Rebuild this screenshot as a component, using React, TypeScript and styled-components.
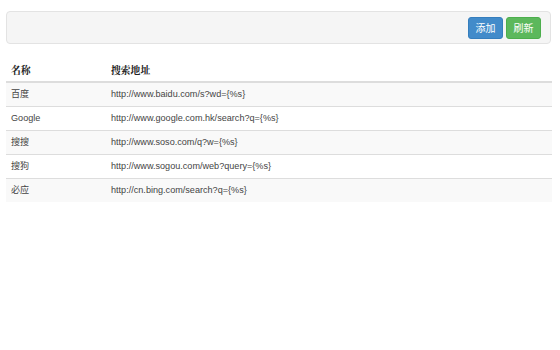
import styled, { createGlobalStyle } from "styled-components";

const GlobalStyle = createGlobalStyle`
  body {
    margin: 0;
    background: #fff;
    font-family: "Liberation Sans", Arial, "Noto Sans CJK SC", sans-serif;
    color: #333;
  }
`;

const Page = styled.div`
  width: 546px;
  padding: 11px 0 0 6px;
`;

const Toolbar = styled.div`
  height: 31px;
  margin-right: 1px;
  display: flex;
  align-items: center;
  justify-content: flex-end;
  gap: 3px;
  padding: 0 9px;
  background-color: #f5f5f5;
  border: 1px solid #e3e3e3;
  border-radius: 4px;
`;

const Button = styled.button<{ $variation: "primary" | "success" }>`
  width: 35px;
  height: 22px;
  padding: 0;
  border: 1px solid
    ${(p) => (p.$variation === "primary" ? "#357ebd" : "#4cae4c")};
  border-radius: 3px;
  background-color: ${(p) =>
    p.$variation === "primary" ? "#428bca" : "#5cb85c"};
  color: #fff;
  font-family: "Noto Sans CJK SC", sans-serif;
  font-size: 10px;
  line-height: 20px;
  cursor: pointer;
`;

const Table = styled.table`
  width: 546px;
  margin-top: 14px;
  border-collapse: collapse;
  font-size: 9.1px;

  & tbody tr + tr td {
    border-top: 1px solid #dddddd;
  }
`;

const Th = styled.th`
  padding: 6px 5px 5px;
  line-height: 12px;
  text-align: left;
  font-size: 9.8px;
  font-weight: bold;
  font-family: "Noto Serif CJK SC", "Noto Sans CJK SC", serif;
  color: #222;
  border-bottom: 2px solid #dddddd;
  &:first-child {
    width: 90px;
  }
`;

const Row = styled.tr<{ $striped: boolean }>`
  background-color: ${(p) => (p.$striped ? "#f9f9f9" : "#fff")};
`;

const Td = styled.td`
  padding: 6px 5px;
  line-height: 11px;
  color: #444;
  font-family: "Liberation Sans", Arial, "Noto Sans CJK SC", sans-serif;
`;

const engines = [
  { name: "百度", url: "http://www.baidu.com/s?wd={%s}" },
  { name: "Google", url: "http://www.google.com.hk/search?q={%s}" },
  { name: "搜搜", url: "http://www.soso.com/q?w={%s}" },
  { name: "搜狗", url: "http://www.sogou.com/web?query={%s}" },
  { name: "必应", url: "http://cn.bing.com/search?q={%s}" },
];

function App() {
  return (
    <>
      <GlobalStyle />
      <Page>
        <Toolbar>
          <Button $variation="primary">添加</Button>
          <Button $variation="success">刷新</Button>
        </Toolbar>
        <Table>
          <thead>
            <tr>
              <Th>名称</Th>
              <Th>搜索地址</Th>
            </tr>
          </thead>
          <tbody>
            {engines.map((e, i) => (
              <Row key={e.name} $striped={i % 2 === 0}>
                <Td>{e.name}</Td>
                <Td>{e.url}</Td>
              </Row>
            ))}
          </tbody>
        </Table>
      </Page>
    </>
  );
}

export default App;
